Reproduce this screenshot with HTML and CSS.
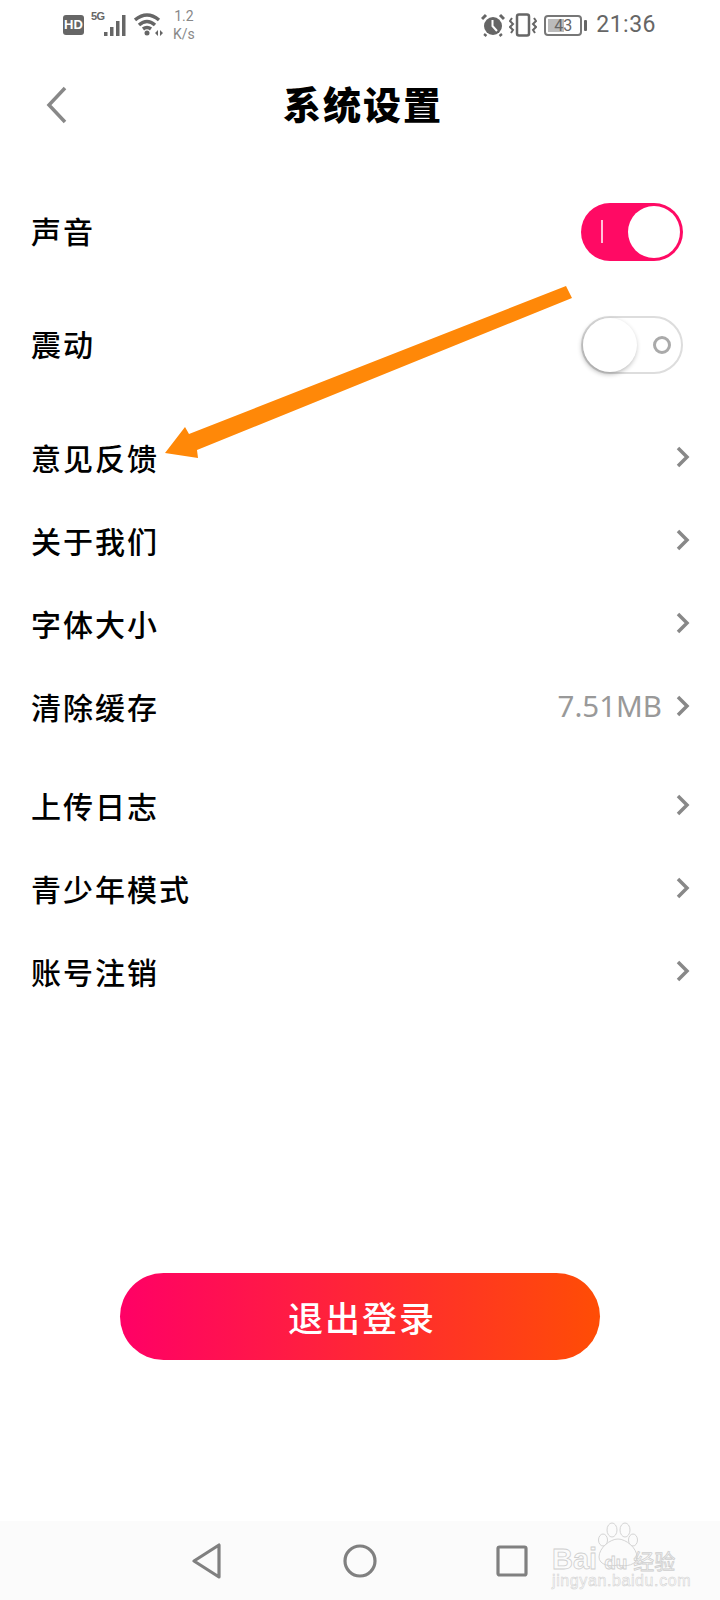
FILE: index.html
```html
<!DOCTYPE html>
<html lang="zh-CN">
<head>
  <meta charset="UTF-8" />
  <meta name="viewport" content="width=device-width, initial-scale=1.0"/>
  <title>系统设置</title>
  <link rel="stylesheet" href="styles.css">
</head>
<body>
  <div class="page">

    <div class="status">
      <div class="status-left">
        <span class="hd">HD</span>
        <span class="net">
          <span class="five-g">5G</span>
          <svg class="signal" width="24" height="23" viewBox="0 0 24 23">
            <rect x="0" y="18" width="3.5" height="4"/>
            <rect x="6" y="13" width="3.5" height="9"/>
            <rect x="12" y="7" width="3.5" height="15"/>
            <rect x="18" y="1" width="3.5" height="21"/>
          </svg>
        </span>
        <svg class="wifi" width="30" height="24" viewBox="0 0 30 24">
          <path d="M1 7 Q13 -3 25 7"/>
          <path d="M5 12 Q13 5 21 12"/>
          <path d="M9 16 Q13 13 17 16"/>
          <circle class="solid" cx="13" cy="20" r="2.5"/>
          <path class="solid" d="M21 20 L24 17 V23 Z M26 17 L29 20 L26 23 Z"/>
        </svg>
        <span class="speed">1.2<br>K/s</span>
      </div>
      <div class="status-right">
        <svg class="alarm" width="24" height="24" viewBox="0 0 24 24">
          <circle class="solid" cx="12" cy="13" r="9"/>
          <path class="hand" d="M11.5 7 V13 L16 18"/>
          <path d="M1 6 L5 2 M23 6 L19 2 M5 21 L3.5 23 M19 21 L20.5 23"/>
        </svg>
        <svg class="vibrate" width="28" height="24" viewBox="0 0 28 24">
          <rect x="8" y="1.5" width="12" height="21" rx="2"/>
          <path d="M3 5 L1 8 L4 11 L1 14 L4 17 L2 20 M25 5 L27 8 L24 11 L27 14 L24 17 L26 20"/>
        </svg>
        <span class="battery">
          <span class="battery-body"><span class="battery-fill"></span><span class="battery-num">43</span></span>
          <span class="battery-pin"></span>
        </span>
        <span class="time">21:36</span>
      </div>
    </div>

    <header class="title-bar">
      <svg class="back" width="22" height="38" viewBox="0 0 22 38">
        <path d="M19 2 L3 19 L19 36"/>
      </svg>
      <h1>系统设置</h1>
    </header>

    <main class="settings">
      <section class="group">
        <div class="row row-tall">
          <span>声音</span>
          <span class="toggle toggle-on"><i class="mark-on"></i><i class="knob"></i></span>
        </div>
        <div class="row row-tall">
          <span>震动</span>
          <span class="toggle toggle-off"><i class="knob"></i><i class="mark-off"></i></span>
        </div>
      </section>

      <section class="group">
        <div class="row"><span>意见反馈</span><svg class="chev" width="16" height="22" viewBox="0 0 16 22"><path d="M3 2 L12 11 L3 20"/></svg></div>
        <div class="row"><span>关于我们</span><svg class="chev" width="16" height="22" viewBox="0 0 16 22"><path d="M3 2 L12 11 L3 20"/></svg></div>
        <div class="row"><span>字体大小</span><svg class="chev" width="16" height="22" viewBox="0 0 16 22"><path d="M3 2 L12 11 L3 20"/></svg></div>
        <div class="row">
          <span>清除缓存</span>
          <span class="row-end"><span class="cache">7.51MB</span><svg class="chev" width="16" height="22" viewBox="0 0 16 22"><path d="M3 2 L12 11 L3 20"/></svg></span>
        </div>
      </section>

      <section class="group">
        <div class="row"><span>上传日志</span><svg class="chev" width="16" height="22" viewBox="0 0 16 22"><path d="M3 2 L12 11 L3 20"/></svg></div>
        <div class="row"><span>青少年模式</span><svg class="chev" width="16" height="22" viewBox="0 0 16 22"><path d="M3 2 L12 11 L3 20"/></svg></div>
        <div class="row"><span>账号注销</span><svg class="chev" width="16" height="22" viewBox="0 0 16 22"><path d="M3 2 L12 11 L3 20"/></svg></div>
      </section>

      <button class="logout">退出登录</button>
    </main>

    <nav class="nav-bar">
      <svg class="nav-icon" width="30" height="36" viewBox="0 0 30 36">
        <path d="M27 2 V34 L2 18 Z"/>
      </svg>
      <svg class="nav-icon nav-home" width="34" height="36" viewBox="0 0 34 36">
        <circle cx="17" cy="18" r="15"/>
      </svg>
      <svg class="nav-icon" width="32" height="34" viewBox="0 0 32 34">
        <rect x="2" y="3" width="28" height="28" rx="1.5"/>
      </svg>
    </nav>

    <!-- annotation drawn on top of the screenshot -->
    <svg class="arrow" width="420" height="180" viewBox="160 285 420 180">
      <polygon points="566,286 572,298 197,450 198,458 165,453 185,427 189,434"/>
    </svg>

    <div class="watermark">
      <svg class="paw" width="44" height="48" viewBox="0 0 44 48">
        <ellipse cx="16" cy="8" rx="5" ry="7"/>
        <ellipse cx="29" cy="8" rx="5" ry="7"/>
        <ellipse cx="7" cy="18" rx="4.5" ry="6"/>
        <ellipse cx="37" cy="18" rx="4.5" ry="6"/>
        <path d="M22 17 C14 17 3 26 3 35 C3 43 14 45 22 43 C30 45 41 43 41 35 C41 26 30 17 22 17 Z"/>
      </svg>
      <div class="wm-top">Bai<span class="wm-du">du</span><span class="wm-cn">经验</span></div>
      <div class="wm-url">jingyan.baidu.com</div>
    </div>

  </div>
</body>
</html>
```

FILE: styles.css
```css
* { box-sizing: border-box; }
body {
  margin: 0;
  background: #fff;
  font-family: "Noto Sans CJK SC", "Noto Sans", sans-serif;
  color: #000;
}
.page {
  position: relative;
  width: 720px;
  height: 1600px;
  display: flex;
  flex-direction: column;
  overflow: hidden;
}

/* status bar */
.status {
  height: 50px;
  padding: 0 64px 0 63px;
  display: flex;
  justify-content: space-between;
  align-items: center;
  color: #666;
}
.status svg path {
  fill: none;
  stroke: #666;
  stroke-width: 3.5;
}
.status svg .solid,
.status svg circle.solid { fill: #666; stroke: none; }
.status-left,
.status-right {
  display: flex;
  align-items: center;
}
.hd {
  width: 21px;
  height: 20px;
  background: #666;
  border-radius: 3px;
  color: #fff;
  font: bold 13px/20px "Liberation Sans", sans-serif;
  text-align: center;
}
.net {
  display: flex;
  align-items: flex-end;
  margin-left: 7px;
}
.five-g {
  align-self: flex-start;
  font: bold 11px/11px "Liberation Sans", sans-serif;
  letter-spacing: -0.5px;
  width: 13px;
  margin-top: -3px;
}
.signal rect { fill: #666; }
.wifi { margin-left: 6px; }
.speed {
  margin-left: 9px;
  font: 14px/18px "Roboto", sans-serif;
  color: #888;
  text-align: center;
}
.status .alarm .hand { stroke: #fff; stroke-width: 2; }
.status .alarm path { stroke-width: 3; }
.status .vibrate rect { fill: none; stroke: #666; stroke-width: 2.5; }
.status .vibrate path { stroke-width: 2; }
.vibrate { margin-left: 4px; }
.battery {
  display: flex;
  align-items: center;
  margin-left: 7px;
}
.battery-body {
  position: relative;
  width: 38px;
  height: 21px;
  border: 2px solid #777;
  border-radius: 4px;
  display: block;
}
.battery-fill {
  position: absolute;
  left: 2px;
  top: 2px;
  bottom: 2px;
  width: 16px;
  background: #bbb;
}
.battery-num {
  position: absolute;
  left: 0;
  right: 0;
  top: 0;
  font: 16px/17px "Roboto", sans-serif;
  color: #666;
  text-align: center;
}
.battery-pin {
  width: 3px;
  height: 11px;
  margin-left: 2px;
  background: #666;
  border-radius: 1px;
}
.time {
  margin-left: 9px;
  font: 23px/28px "Roboto", sans-serif;
  letter-spacing: 0.5px;
  color: #666;
}

/* title */
.title-bar {
  position: relative;
  height: 110px;
  display: flex;
  align-items: center;
  justify-content: center;
}
.title-bar h1 {
  margin: -4px 0 0 6px;
  font-size: 38px;
  font-weight: 900;
  letter-spacing: 2px;
  line-height: 50px;
}
.back {
  position: absolute;
  left: 46px;
  top: 36px;
}
.back path {
  fill: none;
  stroke: #888;
  stroke-width: 3.5;
}

/* settings list */
.settings {
  flex: 1;
  padding-top: 13px;
}
.group { margin-bottom: 16px; }
.row {
  height: 83px;
  padding: 0 29px 0 31px;
  display: flex;
  justify-content: space-between;
  align-items: center;
  font-size: 30px;
  font-weight: 500;
  letter-spacing: 2px;
}
.row-tall { height: 113px; }
.row-end {
  display: flex;
  align-items: center;
}
.cache {
  margin-right: 13px;
  font: 29.5px/40px "Noto Sans", sans-serif;
  letter-spacing: 0;
  color: #999;
}
.chev { display: block; }
.chev path {
  fill: none;
  stroke: #888;
  stroke-width: 3.5;
}

/* toggles */
.toggle {
  position: relative;
  width: 102px;
  height: 58px;
  margin: 4px 8px 0 0;
  border-radius: 29px;
  display: flex;
  align-items: center;
}
.toggle i { display: block; }
.toggle-on {
  background: #ff0a64;
  justify-content: space-between;
  padding: 0 3px 0 20px;
}
.toggle-on .knob {
  width: 52px;
  height: 52px;
  border-radius: 50%;
  background: #fff;
}
.mark-on {
  width: 2px;
  height: 23px;
  background: #ffc2d8;
}
.toggle-off {
  border: 2px solid #ddd;
  justify-content: space-between;
  padding-right: 10px;
}
.toggle-off .knob {
  width: 54px;
  height: 54px;
  border-radius: 50%;
  background: #fff;
  box-shadow: -1px 2px 5px rgba(0,0,0,0.3);
}
.mark-off {
  width: 18px;
  height: 18px;
  border: 3px solid #aaa;
  border-radius: 50%;
}

/* logout */
.logout {
  display: block;
  width: 480px;
  height: 87px;
  margin: 261px auto 0;
  padding: 0 0 0 4px;
  border: none;
  border-radius: 44px;
  background: linear-gradient(90deg, #ff0066, #ff4d05);
  color: #fff;
  font-family: inherit;
  font-size: 35px;
  font-weight: 500;
  letter-spacing: 2px;
}

/* bottom nav */
.nav-bar {
  height: 79px;
  background: #fbfbfb;
  padding: 0 192px;
  display: flex;
  justify-content: space-between;
  align-items: center;
}
.nav-home { margin-left: 1px; }
.nav-icon path,
.nav-icon circle,
.nav-icon rect {
  fill: none;
  stroke: #808080;
  stroke-width: 3.2;
  stroke-linejoin: round;
}

/* overlays */
.arrow {
  position: absolute;
  left: 160px;
  top: 285px;
  filter: blur(0.5px);
}
.arrow polygon { fill: #ff8808; }
.watermark {
  position: absolute;
  left: 552px;
  top: 1522px;
  width: 132px;
  height: 70px;
  color: transparent;
  -webkit-text-stroke: 0.8px #cfcfcf;
}
.paw {
  position: absolute;
  left: 44px;
  top: 0;
}
.paw ellipse,
.paw path {
  fill: #fbfbfb;
  stroke: #d4d4d4;
  stroke-width: 1;
}
.wm-top {
  position: absolute;
  left: 0;
  top: 20px;
  height: 34px;
  font: bold 29px/34px "Liberation Sans", sans-serif;
  white-space: nowrap;
}
.wm-du {
  font-size: 19px;
  margin: 0 6px 0 7px;
}
.wm-cn {
  font: 21px/34px "Noto Sans CJK SC", sans-serif;
}
.wm-url {
  position: absolute;
  left: 0;
  top: 50px;
  font: 16px/18px "Liberation Sans", sans-serif;
  letter-spacing: 0.6px;
  white-space: nowrap;
  -webkit-text-stroke-width: 0.5px;
}
```
